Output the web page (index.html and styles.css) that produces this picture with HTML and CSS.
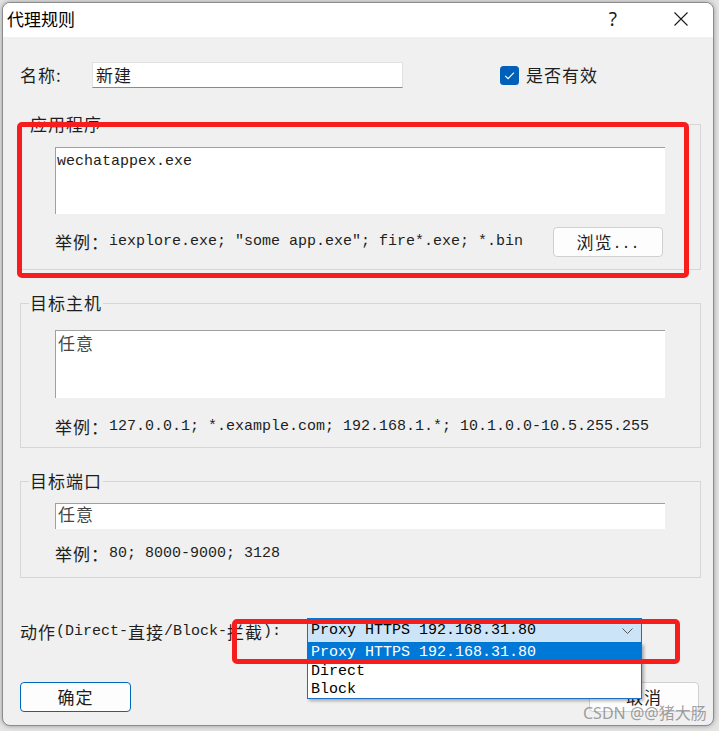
FILE: index.html
```html
<!DOCTYPE html>
<html lang="zh">
<head>
<meta charset="utf-8">
<title>代理规则</title>
<link rel="stylesheet" href="styles.css">
</head>
<body>
<div class="window">
  <div class="titlebar">
    <span class="title">代理规则</span>
    <span class="help">?</span>
    <span class="close"><svg width="16" height="14" viewBox="0 0 16 14"><path d="M1.5 0.5L14.5 13.5M14.5 0.5L1.5 13.5" stroke="#1a1a1a" stroke-width="1.1" fill="none"/></svg></span>
  </div>
  <div class="body">
    <div class="name-row">
      <span class="name-label cn">名称:</span>
      <div class="textbox"><span class="cn">新建</span></div>
      <div class="check">
        <svg width="19" height="19" viewBox="0 0 19 19"><rect width="19" height="19" rx="3.5" fill="#005fb8"/><path d="M5.2 9.8l2.9 2.9 5.8-6" fill="none" stroke="#fff" stroke-width="1.2"/></svg>
        <span class="cn">是否有效</span>
      </div>
    </div>

    <fieldset class="group g-app">
      <legend class="cn">应用程序</legend>
      <div class="group-body gb-app">
        <div class="area">wechatappex.exe</div>
        <div class="hint-row hr-app">
          <span class="hint"><span class="cn">举例：</span>iexplore.exe; "some app.exe"; fire*.exe; *.bin</span>
          <div class="btn browse"><span class="cn">浏览</span><span class="dots">...</span></div>
        </div>
      </div>
    </fieldset>

    <fieldset class="group g-host">
      <legend class="cn">目标主机</legend>
      <div class="group-body gb-host">
        <div class="area area-host"><span class="cn soft">任意</span></div>
        <div class="hint-row hr-host">
          <span class="hint"><span class="cn">举例：</span>127.0.0.1; *.example.com; 192.168.1.*; 10.1.0.0-10.5.255.255</span>
        </div>
      </div>
    </fieldset>

    <fieldset class="group g-port">
      <legend class="cn">目标端口</legend>
      <div class="group-body gb-port">
        <div class="line-edit"><span class="cn soft">任意</span></div>
        <div class="hint-row hr-port">
          <span class="hint"><span class="cn">举例：</span>80; 8000-9000; 3128</span>
        </div>
      </div>
    </fieldset>

    <div class="action-row">
      <span class="action-label"><span class="cn">动作</span>(Direct-<span class="cn">直接</span>/Block-<span class="cn">拦截</span>):</span>
      <div class="select">
        <span>Proxy HTTPS 192.168.31.80</span>
        <svg class="chev" width="11" height="6" viewBox="0 0 11 6"><path d="M0.5 0.5l5 5 5-5" fill="none" stroke="#555" stroke-width="1"/></svg>
        <ul class="dropdown">
          <li class="sel">Proxy HTTPS 192.168.31.80</li>
          <li>Direct</li>
          <li>Block</li>
        </ul>
      </div>
    </div>

    <div class="buttons">
      <div class="btn primary"><span class="cn">确定</span></div>
      <div class="btn cancel"><span class="cn">取消</span></div>
    </div>
  </div>

  <div class="mark mark-app"></div>
  <div class="mark mark-action"></div>
  <div class="watermark">CSDN @@猪大肠</div>
</div>
</body>
</html>
```

FILE: styles.css
```css
html, body {
  margin: 0;
  padding: 0;
}
body {
  background: #e4e4e4;
  font-family: "Liberation Mono", "Noto Sans CJK SC", monospace;
  font-size: 15px;
  line-height: 18px;
  color: #1e1e1e;
  height: 731px;
  overflow: hidden;
}
.cn {
  font-family: "Noto Sans CJK SC", sans-serif;
  font-size: 17px;
  letter-spacing: 1px;
}
.soft {
  color: #454545;
}

.window {
  position: relative;
  margin: 2px 0 0 2px;
  width: 712px;
  height: 724px;
  box-sizing: border-box;
  border: 1px solid #8c8c8c;
  border-radius: 8px;
  background: #f0f0f0;
  overflow: hidden;
  box-shadow: 0 0 5px rgba(0, 0, 0, 0.35);
}

.titlebar {
  height: 34px;
  box-sizing: border-box;
  background: #fff;
  display: flex;
  align-items: center;
  padding: 0 24px 3px 4px;
}
.title {
  font-family: "Noto Sans CJK SC", sans-serif;
  font-size: 17px;
  line-height: 20px;
  color: #000;
}
.help {
  margin-left: auto;
  font-family: "Noto Sans", sans-serif;
  font-size: 19px;
  line-height: 20px;
  color: #1a1a1a;
}
.close {
  margin-left: 56px;
  display: flex;
}

.body {
  padding: 25px 12px 0 17px;
}

.name-row {
  display: flex;
  align-items: center;
  height: 26px;
}
.name-label {
  width: 72px;
  line-height: 20px;
}
.textbox {
  width: 311px;
  height: 26px;
  box-sizing: border-box;
  background: #fff;
  border: 1px solid #e2e2e2;
  border-bottom-color: #8a8a8a;
  display: flex;
  align-items: center;
  padding-left: 3px;
}
.check {
  margin-left: 97px;
  display: flex;
  align-items: center;
  gap: 7px;
}

.group {
  margin: 0;
  padding: 0;
  border: 1px solid #d6d6d6;
  min-width: 0;
}
.group legend {
  margin-left: 8px;
  padding: 0 1px;
  height: 18px;
  line-height: 18px;
}
.g-app { margin-top: 27px; }
.g-host { margin-top: 24px; }
.g-port { margin-top: 24px; }

.group-body {
  padding: 14px 35px 12px 34px;
}
.gb-host { padding-top: 18px; padding-bottom: 11px; }
.gb-port { padding-top: 13px; padding-bottom: 14px; }

.area {
  height: 67px;
  box-sizing: border-box;
  background: #fff;
  border-top: 1px solid #a0a0a0;
  border-left: 1px solid #a0a0a0;
  padding: 5px 0 0 1px;
}
.area-host {
  height: 68px;
  padding: 2px 0 0 2px;
  line-height: 20px;
}
.line-edit {
  height: 26px;
  box-sizing: border-box;
  background: #fff;
  border-top: 1px solid #a0a0a0;
  border-left: 1px solid #a0a0a0;
  padding: 0 0 0 2px;
  line-height: 20px;
}

.hint-row {
  display: flex;
  align-items: center;
  justify-content: space-between;
}
.hr-app { margin-top: 13px; }
.hr-host { margin-top: 20px; height: 18px; }
.hr-port { margin-top: 16px; height: 18px; }
.hint {
  display: flex;
  align-items: center;
  white-space: pre;
  height: 18px;
  line-height: 18px;
}

.btn {
  box-sizing: border-box;
  height: 30px;
  width: 110px;
  background: #fdfdfd;
  border: 1px solid #d0d0d0;
  border-radius: 4px;
  display: flex;
  align-items: center;
  justify-content: center;
  color: #1e1e1e;
}
.browse {
  margin-right: 2px;
}
.dots {
  align-self: center;
  padding-top: 5px;
}

.action-row {
  margin-top: 40px;
  display: flex;
  align-items: center;
  height: 25px;
}
.action-label {
  display: flex;
  align-items: center;
  width: 287px;
  height: 18px;
  padding-top: 3px;
  white-space: pre;
}
.select {
  position: relative;
  width: 335px;
  height: 25px;
  box-sizing: border-box;
  border: 1px solid #0078d7;
  background: #cce4f7;
  display: flex;
  align-items: center;
  padding-left: 3px;
  color: #000;
}
.chev {
  margin-left: auto;
  margin-right: 8px;
}
.dropdown {
  position: absolute;
  left: -1px;
  top: calc(100% + 1px);
  width: calc(100% + 2px);
  box-sizing: border-box;
  margin: 0;
  padding: 0;
  list-style: none;
  background: #fff;
  border: 1px solid #1f6fc5;
  border-top: none;
  box-shadow: 2px 2px 3px rgba(0, 0, 0, 0.3);
  z-index: 3;
}
.dropdown li {
  height: 18px;
  line-height: 19px;
  padding-left: 3px;
  color: #000;
}
.dropdown li.sel {
  height: 19px;
  line-height: 20px;
  background: #0078d7;
  color: #fff;
}

.buttons {
  margin-top: 39px;
  display: flex;
  justify-content: space-between;
  padding-right: 2px;
}
.primary {
  width: 111px;
  border-color: #0067c0;
}

.mark {
  position: absolute;
  box-sizing: border-box;
  border: 5px solid #f81d1d;
  border-radius: 5px;
  z-index: 5;
}
.mark-app {
  left: 14px;
  top: 119px;
  width: 672px;
  height: 156px;
}
.mark-action {
  left: 229px;
  top: 616px;
  width: 448px;
  height: 45px;
}

.watermark {
  position: absolute;
  left: 580px;
  top: 700px;
  font-family: "Noto Sans", "Noto Sans CJK SC", sans-serif;
  font-size: 16px;
  line-height: 20px;
  color: rgba(110, 110, 110, 0.65);
  white-space: nowrap;
  z-index: 6;
}
```
